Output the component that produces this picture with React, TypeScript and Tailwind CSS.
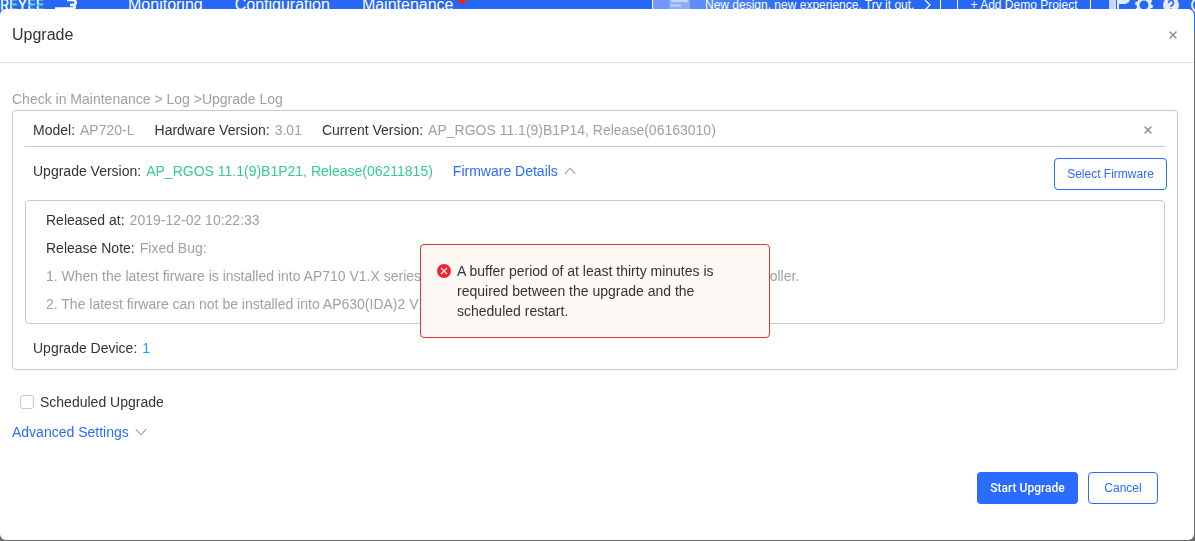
import React, { useState } from "react";
import { X } from "lucide-react";

type FieldProps = {
  label: string;
  children: React.ReactNode;
};

function Field({ label, children }: FieldProps) {
  return (
    <div className="flex gap-[5px]">
      <span className="text-[#333]">{label}</span>
      <span className="text-[#a0a0a0]">{children}</span>
    </div>
  );
}

function Arrow({ up }: { up: boolean }) {
  return (
    <svg width="12" height="8" viewBox="0 0 12 8" fill="none" stroke="#999" strokeWidth="1.1">
      <path d={up ? "M.8 6.8 6 1.2l5.2 5.6" : "M.8 1.2 6 6.8l5.2-5.6"} />
    </svg>
  );
}

function Logo() {
  return (
    <div className="flex w-20 shrink-0 items-center">
      <span className="relative w-12 font-[Inter,sans-serif] text-sm font-medium leading-4">
        REYEE
        <svg className="absolute left-0 top-0" width="48" height="16" stroke="#22d3a6" strokeWidth="1.5">
          <path d="M11 8h6M28 8h6M37 8h6" />
        </svg>
      </span>
      {/* swoosh next to the name */}
      <svg className="ml-1.5" width="24" height="16" fill="none" stroke="#fff" strokeWidth="2.5">
        <path d="M13 3h5c5 0 5 5 0 5h-2M18 8c3 0 4 3 1 3.500H1" />
      </svg>
    </div>
  );
}

function TopBar() {
  return (
    <header className="-mt-[22px] flex h-[54px] items-center overflow-hidden bg-[#2668f5] text-white">
      <Logo />
      <nav className="ml-12 flex gap-8 text-base leading-4">
        <a href="#monitoring">Monitoring</a>
        <a href="#configuration">Configuration</a>
        <a href="#maintenance" className="relative">
          Maintenance
          <span className="absolute -right-3 -top-px size-2 rounded-full bg-[#e02a1f]"></span>
        </a>
      </nav>
      <div className="ml-auto flex shrink-0 items-center gap-4 text-xs">
        <button className="flex h-8 w-[289px] items-center border border-white bg-linear-to-r from-[#739bfb] to-[#2668f5] to-50% pl-4">
          <svg width="21" height="28" viewBox="0 0 21 28">
            <path d="M0 0h21v28H0z" fill="#8fadf5" />
            <path d="M2 10h17M2 14.500h10" stroke="#c3d4fb" strokeWidth="2" />
          </svg>
          <span className="ml-[15px]">New design, new experience. Try it out.</span>
          <svg className="ml-2.5" width="8" height="12" fill="none" stroke="#fff" strokeWidth="1.2">
            <path d="m1 1 5 5-5 5" />
          </svg>
        </button>
        <button className="h-8 w-[134px] border border-white text-center">+ Add Demo Project</button>
        <div className="flex h-6 w-[88px] items-center overflow-hidden">
          <svg width="24" height="24" className="shrink-0" fill="#e4ecff">
            <path d="M2 2h7v20H2z" opacity=".85" />
            <path d="M10 2h2v20h-2z" />
            <path d="M12 2h11v5a6 6 0 0 1-5 4h-6z" />
          </svg>
          <svg width="20" height="20" viewBox="0 0 20 20" className="ml-[3px] shrink-0" fill="none" stroke="#e4ecff">
            <circle cx="10" cy="10" r="6" strokeWidth="3" />
            <circle cx="10" cy="10" r="8" strokeWidth="2" strokeDasharray="3.14 3.14" />
          </svg>
          <svg width="16" height="16" viewBox="0 0 16 16" className="ml-[9px] shrink-0">
            <circle cx="8" cy="8" r="8" fill="#e4ecff" />
            <path d="M5.500 6a2.500 2.500 0 1 1 3.500 2.300q-1 .5-1 1.700" fill="none" stroke="#2668f5" strokeWidth="1.600" />
            <circle cx="8" cy="12.200" r="1" fill="#2668f5" />
          </svg>
          <svg width="16" height="16" className="ml-3 shrink-0" fill="none" stroke="#e4ecff" strokeWidth="2">
            <circle cx="8" cy="8" r="7" />
          </svg>
        </div>
      </div>
    </header>
  );
}

function ErrorMessage() {
  return (
    <div className="pointer-events-none fixed inset-0 flex items-start justify-center pr-[5px] pt-[244px]">
      <div
        role="alert"
        className="flex w-[350px] gap-1.5 rounded border border-[#dc3a2c] bg-[#fff9f6] px-4 py-4 text-sm leading-5 text-[#333]"
      >
        <svg width="14" height="14" viewBox="0 0 14 14" className="mt-[3px] shrink-0">
          <circle cx="7" cy="7" r="7" fill="#f5222d" />
          <path d="m4 4 6 6m0-6-6 6" stroke="#fff" strokeWidth="1.200" />
        </svg>
        <p className="w-[270px]">
          A buffer period of at least thirty minutes is required between the upgrade and the scheduled restart.
        </p>
      </div>
    </div>
  );
}

function App() {
  const [showDetails, setShowDetails] = useState<boolean>(true);
  const [scheduled, setScheduled] = useState<boolean>(false);

  return (
    <div className="min-h-screen overflow-hidden bg-[#6b6b6b] font-['Liberation_Sans',Arial,sans-serif]">
      <TopBar />

      <div className="fixed inset-0 flex flex-col pb-px pr-px pt-[9px]">
        <div
          role="dialog"
          aria-labelledby="upgrade-title"
          className="flex-1 overflow-auto rounded-md bg-white text-sm leading-5"
        >
          <div className="flex h-[54px] items-center justify-between border-b border-[#e3e3e3] pb-0.5 pl-3 pr-[15px]">
            <h2 id="upgrade-title" className="text-base text-[#333]">
              Upgrade
            </h2>
            <button aria-label="Close">
              <X size={12} strokeWidth={3} color="#8c8c8c" />
            </button>
          </div>

          <div className="pl-3 pr-4 pt-[26px]">
            <p className="mb-px text-[#a0a0a0]">Check in Maintenance &gt; Log &gt;Upgrade Log</p>

            <section className="rounded border border-[#c9c9c9] px-3">
              <div className="flex h-9 items-center gap-5 border-b border-[#c9c9c9] px-2 pt-[3px]">
                <Field label="Model:">AP720-L</Field>
                <Field label="Hardware Version:">3.01</Field>
                <Field label="Current Version:">AP_RGOS 11.1(9)B1P14, Release(06163010)</Field>
                <button aria-label="Remove" className="ml-auto mr-[3px]">
                  <X size={12} strokeWidth={3} color="#8c8c8c" />
                </button>
              </div>

              <div className="flex h-[53px] items-start gap-5 pl-2 pt-[11px] leading-[26px]">
                <Field label="Upgrade Version:">
                  <span className="text-[#36cb92]">AP_RGOS 11.1(9)B1P21, Release(06211815)</span>
                </Field>
                <button
                  className="flex items-center gap-1.5 text-[#2b6bff]"
                  onClick={() => setShowDetails(!showDetails)}
                >
                  Firmware Details
                  <Arrow up={showDetails} />
                </button>
                <button className="-mr-0.5 ml-auto h-8 w-[113px] rounded border border-[#2b6bff] text-xs text-[#2b6bff]">
                  Select Firmware
                </button>
              </div>

              {showDetails && (
                <div className="rounded border border-[#c9c9c9] px-5 py-[5px] leading-7 text-[#a0a0a0]">
                  <Field label="Released at:">2019-12-02 10:22:33</Field>
                  <Field label="Release Note:">Fixed Bug:</Field>
                  <p>
                    1. When the latest firware is installed into AP710 V1.X series, the devices can not be configured by
                    the wireless controller.
                  </p>
                  <p>2. The latest firware can not be installed into AP630(IDA)2 V1.X series.</p>
                </div>
              )}

              <div className="px-2 pb-[7px] pt-2.5 leading-7">
                <Field label="Upgrade Device:">
                  <a href="#devices" className="text-[#1e9fff]">
                    1
                  </a>
                </Field>
              </div>
            </section>

            <label className="mt-[22px] flex h-5 w-fit items-center gap-1.5 pl-2 text-[#333]">
              <input
                type="checkbox"
                checked={scheduled}
                onChange={(e) => setScheduled(e.target.checked)}
                className="size-3.5 appearance-none rounded-[3px] border border-[#c9c9c9] bg-white checked:bg-[#2b6bff]"
              />
              Scheduled Upgrade
            </label>

            <button className="mt-2.5 flex items-center gap-1.5 text-[#2b6bff]">
              Advanced Settings
              <Arrow up={false} />
            </button>

            <div className="mt-[30px] flex justify-end gap-2.5 pr-5 text-xs">
              <button className="h-8 w-[101px] rounded bg-[#2b6bff] font-[Roboto,sans-serif] font-medium text-white">
                Start Upgrade
              </button>
              <button className="h-8 w-[70px] rounded border border-[#2b6bff] text-[#2b6bff]">Cancel</button>
            </div>
          </div>
        </div>
      </div>

      <ErrorMessage />
    </div>
  );
}

export default App;
